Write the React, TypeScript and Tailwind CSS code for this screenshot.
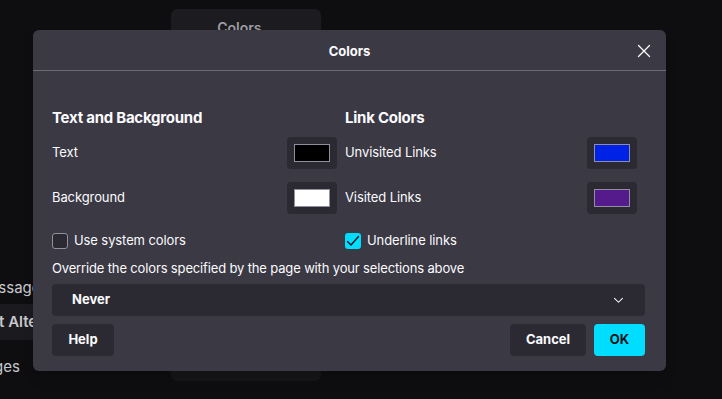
export default function App() {
  const font = { fontFamily: "Inter, 'Noto Sans', sans-serif" };

  const Swatch = ({ color }: { color: string }) => (
    <button className="w-[50px] h-[32px] rounded-[4px] bg-[#2b2a33] flex items-center justify-center">
      <span className="block w-[36px] h-[18px] border border-[#8f8f9d]" style={{ backgroundColor: color }} />
    </button>
  );

  const Row = ({ label, color }: { label: string; color: string }) => (
    <div className="flex items-center justify-between h-[32px]">
      <span className="text-[13px] text-[#fbfbfe] tracking-[-0.1px]">{label}</span>
      <Swatch color={color} />
    </div>
  );

  return (
    <div className="relative w-[722px] h-[399px] overflow-hidden bg-[#0e0e11]" style={font}>
      {/* page behind the dialog */}
      <div className="flex">
        <div className="w-[60px] shrink-0 flex flex-col pt-[278px]">
          <div className="h-[20px] -ml-[24px] text-[15px] text-[#c8c8cc] whitespace-nowrap leading-[20px]">Messages</div>
          <div className="mt-[6px] h-[36px] bg-[#1b1b1f] flex items-center text-[15px] font-semibold text-[#c8c8cc] whitespace-nowrap overflow-hidden">
            <span className="-ml-[27px]">Text Alternatives</span>
          </div>
          <div className="mt-[17px] h-[20px] -ml-[24px] text-[15px] text-[#c8c8cc] whitespace-nowrap leading-[20px]">Pages</div>
        </div>
        <div className="ml-[111px] w-[150px] flex flex-col">
          <div className="mt-[9px] h-[34px] rounded-[6px] bg-[#1c1c20] flex justify-center pt-[8px] text-[14px] font-semibold text-[#9d9da3]">Colors…</div>
          <div className="mt-[316px] h-[22px] rounded-[6px] bg-[#161619]" />
        </div>
      </div>

      {/* dialog */}
      <div className="absolute left-[33px] top-[30px] w-[633px] h-[341px] rounded-[6px] bg-[#3a3944] text-[#fbfbfe] shadow-lg">
        <div className="relative h-[41px] flex items-center justify-center pt-[3px] border-b border-[#6c6b75]">
          <span className="text-[13px] font-bold">Colors</span>
          <button className="absolute right-[15px] top-[14px] w-[14px] h-[14px]">
            <svg viewBox="0 0 14 14" width="14" height="14" fill="none" stroke="#fbfbfe" strokeWidth="1.3" strokeLinecap="round">
              <path d="M1.5 1.5 L12.5 12.5 M12.5 1.5 L1.5 12.5" />
            </svg>
          </button>
        </div>

        <div className="pl-[19px] pr-[21px] pt-[37px]">
          <div className="flex">
            <div className="w-[285px] flex flex-col">
              <div className="h-[20px] text-[15px] font-bold leading-[20px] tracking-[-0.25px]">Text and Background</div>
              <div className="mt-[9px] flex flex-col gap-[13px]">
                <Row label="Text" color="#000000" />
                <Row label="Background" color="#ffffff" />
              </div>
              <label className="mt-[19px] h-[16px] flex items-center gap-[6px] text-[13px] tracking-[-0.1px]">
                <span className="w-[16px] h-[16px] rounded-[3px] border border-[#8f8f9d] bg-[#2b2a33]" />
                Use system colors
              </label>
            </div>
            <div className="ml-[8px] w-[292px] flex flex-col">
              <div className="h-[20px] text-[15px] font-bold leading-[20px] tracking-[-0.25px]">Link Colors</div>
              <div className="mt-[9px] flex flex-col gap-[13px]">
                <Row label="Unvisited Links" color="#0022e6" />
                <Row label="Visited Links" color="#551a8b" />
              </div>
              <label className="mt-[19px] h-[16px] flex items-center gap-[6px] text-[13px] tracking-[-0.1px]">
                <span className="w-[16px] h-[16px] rounded-[3px] bg-[#00ddff] flex items-center justify-center">
                  <svg viewBox="0 0 16 16" width="16" height="16" fill="none" stroke="#15141a" strokeWidth="1.4" strokeLinecap="round" strokeLinejoin="round">
                    <path d="M2.5 8.5 L6 12 L13.5 3.5" />
                  </svg>
                </span>
                Underline links
              </label>
            </div>
          </div>

          <div className="mt-[11px] h-[16px] text-[13px] leading-[16px] tracking-[-0.15px]">Override the colors specified by the page with your selections above</div>

          <button className="mt-[8px] w-full h-[32px] rounded-[4px] bg-[#2b2a33] flex items-center justify-between pl-[20px] pr-[21px]">
            <span className="text-[13px] font-bold">Never</span>
            <svg viewBox="0 0 12 8" width="11" height="7" fill="none" stroke="#fbfbfe" strokeWidth="1.2" strokeLinecap="round" strokeLinejoin="round">
              <path d="M1.5 1.5 L6 6 L10.5 1.5" />
            </svg>
          </button>

          <div className="mt-[8px] flex items-center">
            <button className="w-[62px] h-[32px] rounded-[4px] bg-[#2b2a33] text-[13px] font-bold">Help</button>
            <button className="ml-auto w-[76px] h-[32px] rounded-[4px] bg-[#2b2a33] text-[13px] font-bold">Cancel</button>
            <button className="ml-[8px] w-[51px] h-[32px] rounded-[4px] bg-[#00ddff] text-[13px] font-bold text-[#15141a]">OK</button>
          </div>
        </div>
      </div>
    </div>
  );
}
